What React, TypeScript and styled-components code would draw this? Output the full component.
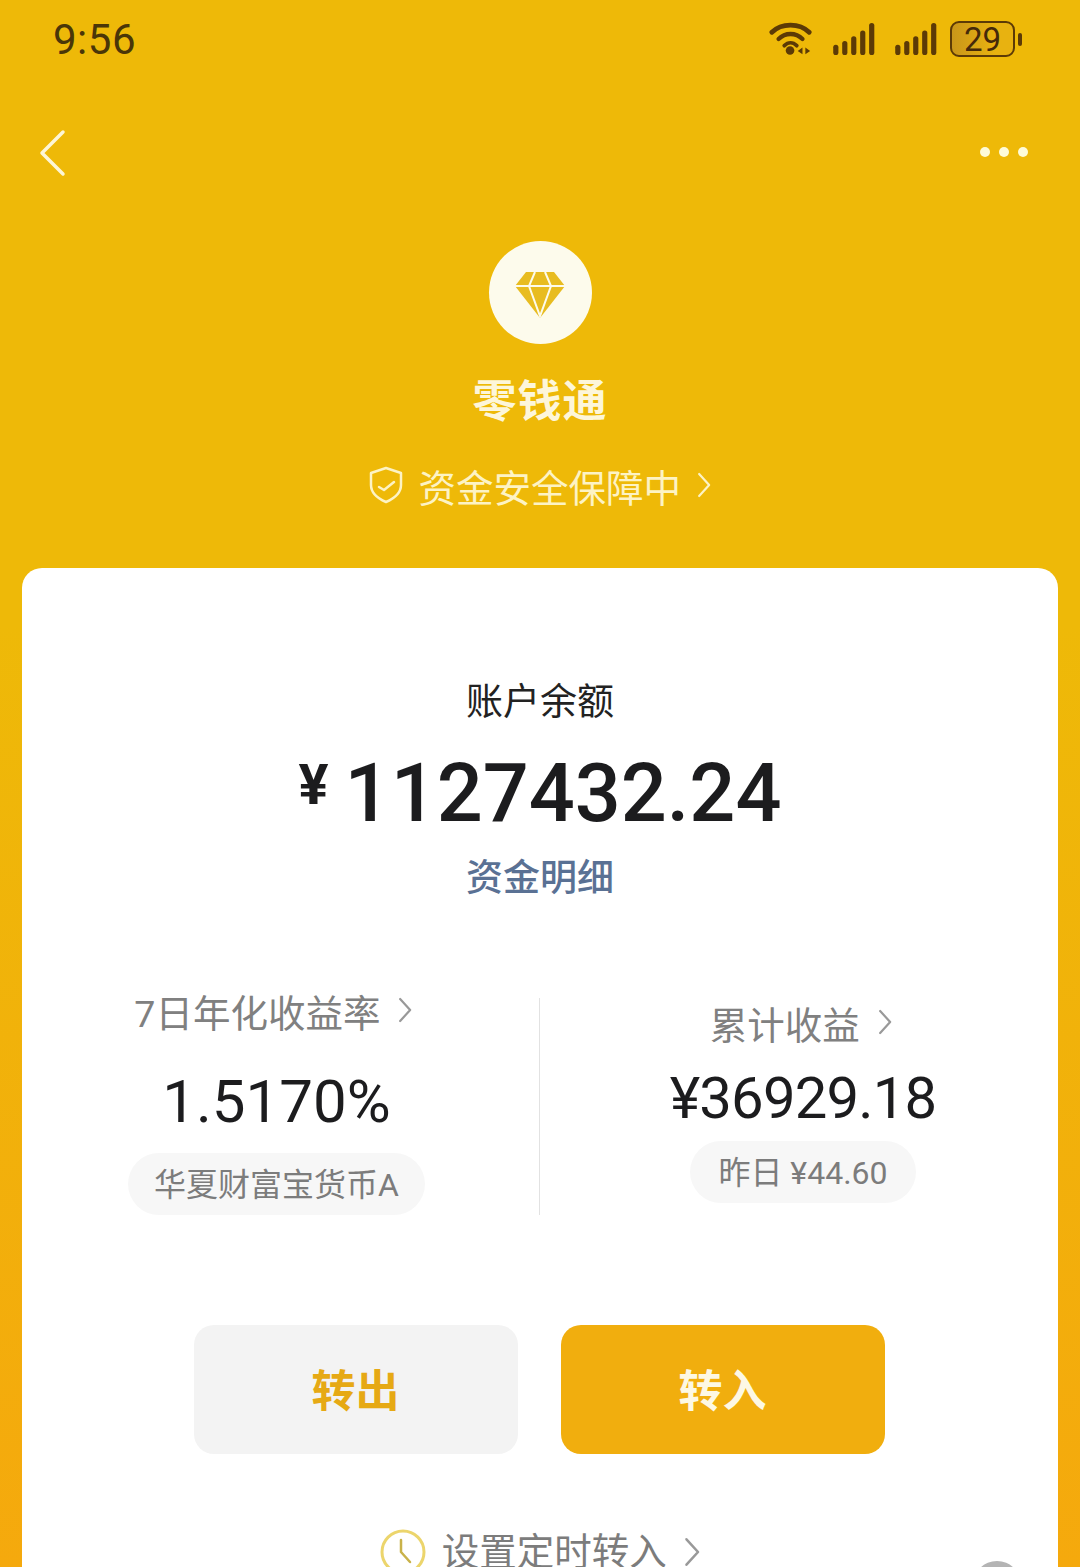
import { createGlobalStyle } from "styled-components";
import styled from "styled-components";

const GlobalStyle = createGlobalStyle`
  html, body {
    margin: 0;
    padding: 0;
    background: #f2b00c;
  }
  * {
    box-sizing: border-box;
  }
`;

const FONT = `Roboto, "Noto Sans CJK SC", sans-serif`;

const Page = styled.div`
  position: relative;
  width: 1080px;
  height: 1567px;
  overflow: hidden;
  background: linear-gradient(180deg, #eeb908 0%, #eeb908 40%, #f5a90d 100%);
  font-family: ${FONT};
`;

const StatusBar = styled.div`
  display: flex;
  justify-content: space-between;
  align-items: center;
  height: 78px;
  padding: 0 58px 0 53px;
`;

const Clock = styled.div`
  font-size: 42px;
  font-family: Roboto, sans-serif;
  letter-spacing: 0.5px;
  color: #4a3608;
`;

const StatusIcons = styled.div`
  display: flex;
  align-items: center;
  gap: 20px;
`;

const BatteryWrap = styled.div`
  display: flex;
  align-items: center;
  gap: 3px;
  margin-left: -7px;
`;

const BatteryBody = styled.div`
  display: flex;
  justify-content: center;
  align-items: center;
  width: 65px;
  height: 36px;
  border: 2.5px solid #5c3a06;
  border-radius: 9px;
  background: linear-gradient(90deg, #c9961a 0%, #e8b210 70%);
  font-family: Roboto, sans-serif;
  font-size: 33px;
  line-height: 31px;
  color: #45290a;
`;

const BatteryCap = styled.div`
  width: 4px;
  height: 13px;
  border-radius: 2px;
  background: #5c3a06;
`;

const NavBar = styled.div`
  display: flex;
  justify-content: space-between;
  align-items: center;
  height: 148px;
  padding: 0 52px 0 38px;
`;

const BackButton = styled.div`
  display: flex;
  padding-top: 2px;
`;

const Head = styled.div`
  display: flex;
  flex-direction: column;
  align-items: center;
  margin-top: 15px;
`;

const Badge = styled.div`
  display: flex;
  justify-content: center;
  align-items: center;
  width: 103px;
  height: 103px;
  padding-top: 5px;
  border-radius: 50%;
  background: #fdfbec;
`;

const Title = styled.div`
  margin-top: 31px;
  font-size: 44px;
  line-height: 54px;
  font-weight: 700;
  letter-spacing: 1px;
  color: #fdf6da;
`;

const SafeRow = styled.div`
  display: flex;
  align-items: center;
  margin-top: 31px;
  height: 50px;
  font-size: 37.5px;
  color: #fdf3c4;
`;

const SafeText = styled.span`
  margin: 0 16px 0 16px;
`;

const Card = styled.div`
  margin: 58px 22px 0;
  height: 1100px;
  background: #fff;
  border-radius: 20px 20px 0 0;
  padding-top: 112px;
  display: flex;
  flex-direction: column;
  align-items: center;
`;

const BalanceLabel = styled.div`
  font-size: 37px;
  line-height: 46px;
  color: #222;
`;

const Amount = styled.div`
  display: flex;
  align-items: baseline;
  margin-top: 16px;
  height: 104px;
  font-family: Roboto, sans-serif;
  font-weight: 500;
  font-size: 81px;
  line-height: 104px;
  color: #1c1c1e;
`;

const AmountUnit = styled.span`
  font-size: 56px;
  font-weight: 700;
  position: relative;
  top: -17px;
  margin-right: 16px;
`;

const DetailLink = styled.div`
  margin-top: 10px;
  font-size: 37px;
  line-height: 46px;
  font-weight: 500;
  color: #5a7194;
`;

const Stats = styled.div`
  display: grid;
  grid-template-columns: 517px 1px 1fr;
  width: 100%;
  height: 207px;
  margin-top: 96px;
`;

const Divider = styled.div`
  background: #e2e2e2;
`;

const StatCol = styled.div<{ $shift: number; $top: number }>`
  display: flex;
  flex-direction: column;
  align-items: center;
  margin-top: ${(p) => p.$top}px;
  transform: translateX(${(p) => p.$shift}px);
`;

const StatLabel = styled.div<{ $trim: number }>`
  display: flex;
  align-items: center;
  gap: 18px;
  height: 46px;
  padding-right: ${(p) => p.$trim}px;
  font-size: 37.5px;
  color: #808080;
`;

const StatValue = styled.div<{ $gap: number; $tight?: boolean }>`
  margin-top: ${(p) => p.$gap}px;
  height: 64px;
  font-family: Roboto, sans-serif;
  font-size: ${(p) => (p.$tight ? 58 : 60)}px;
  letter-spacing: ${(p) => (p.$tight ? -0.8 : 0)}px;
  line-height: 64px;
  color: #1c1c1e;
`;

const Pill = styled.div<{ $gap: number; $pad: number }>`
  display: flex;
  align-items: center;
  margin-top: ${(p) => p.$gap}px;
  height: 62px;
  padding: 0 ${(p) => p.$pad}px 4px;
  border-radius: 31px;
  background: #f7f7f7;
  font-size: 32px;
  color: #7c7c7c;
`;

const Actions = styled.div`
  display: flex;
  justify-content: center;
  gap: 43px;
  margin-top: 120px;
  padding-right: 2px;
`;

const ActionButton = styled.div<{ $primary?: boolean }>`
  display: flex;
  justify-content: center;
  align-items: center;
  width: 324px;
  height: 129px;
  padding-bottom: 4px;
  border-radius: 20px;
  font-size: 44px;
  font-weight: 700;
  background: ${(p) => (p.$primary ? "#f1ae0e" : "#f3f3f3")};
  color: ${(p) => (p.$primary ? "#fdf8e4" : "#e6a914")};
`;

const TimerRow = styled.div`
  display: flex;
  align-items: center;
  margin-top: 73px;
  font-size: 37.5px;
  line-height: 50px;
  color: #7c7c7c;
`;

const TimerText = styled.span`
  margin: 0 17px 0 16px;
`;

const HelpDot = styled.div`
  position: absolute;
  left: 973px;
  top: 1561px;
  width: 48px;
  height: 48px;
  border-radius: 50%;
  background: #b4b4b4;
`;

const Wifi = () => (
  <svg width="44" height="36" viewBox="0 0 46 36" fill="none" stroke="#5c3a06" strokeLinecap="round">
    <path d="M3 11 C13 1 32 1 42 11" strokeWidth="5" />
    <path d="M10 18 C17 11 28 11 35 18" strokeWidth="4.5" />
    <path d="M16 25 C20 21 25 21 29 25" strokeWidth="4" />
    <circle cx="22" cy="30" r="4.5" fill="#5c3a06" stroke="none" />
    <path d="M35 27 L30 30.5 L35 34 Z M38 27 L43 30.5 L38 34 Z" fill="#5c3a06" stroke="none" />
  </svg>
);

const Signal = () => (
  <svg width="42" height="34" viewBox="0 0 44 36" fill="#5c3a06">
    <rect x="0" y="24" width="5.5" height="11" rx="2.7" />
    <rect x="9.5" y="20" width="5.5" height="15" rx="2.7" />
    <rect x="19" y="15" width="5.5" height="20" rx="2.7" />
    <rect x="28.5" y="9" width="5.5" height="26" rx="2.7" />
    <rect x="38" y="1" width="5.5" height="34" rx="2.7" />
  </svg>
);

const BackIcon = () => (
  <svg width="30" height="48" viewBox="0 0 30 48" fill="none" stroke="#fdf6d6" strokeWidth="3.5" strokeLinecap="round" strokeLinejoin="round">
    <path d="M25 3 L4 24 L25 45" />
  </svg>
);

const MoreIcon = () => (
  <svg width="48" height="12" viewBox="0 0 48 12" fill="#fefbd8">
    <circle cx="5" cy="6" r="5" />
    <circle cx="24" cy="6" r="5" />
    <circle cx="43" cy="6" r="5" />
  </svg>
);

const Diamond = () => (
  <svg width="52" height="48" viewBox="0 0 52 48">
    <path d="M12 1 H40 L51 15 L26 47 L1 15 Z" fill="#e8bc20" />
    <path
      d="M1 15 H51 M21 1 L15 15 L26 45 L37 15 L31 1"
      fill="none"
      stroke="#fdfbec"
      strokeWidth="2"
    />
  </svg>
);

const Shield = () => (
  <svg width="34" height="38" viewBox="0 0 34 38" fill="none" stroke="#fdf3c4" strokeWidth="2.5" strokeLinecap="round" strokeLinejoin="round">
    <path d="M17 2 L32 7 V19 C32 28 24 33 17 36 C10 33 2 28 2 19 V7 Z" />
    <path d="M10 21 L15 24 L25 16" />
  </svg>
);

const Chevron = ({ color, size = 26 }: { color: string; size?: number }) => (
  <svg width={size * 0.55} height={size} viewBox="0 0 14 26" fill="none" stroke={color} strokeWidth="2.2" strokeLinecap="round" strokeLinejoin="round">
    <path d="M2 2 L12 13 L2 24" />
  </svg>
);

const ClockIcon = () => (
  <svg width="46" height="46" viewBox="0 0 46 46" fill="none" stroke="#ecd56c" strokeWidth="3" strokeLinecap="round" strokeLinejoin="round">
    <circle cx="23" cy="23" r="21" />
    <path d="M21 11 V23 L30 33" stroke="#c9b24a" strokeWidth="2.5" />
  </svg>
);

export default function App() {
  return (
    <Page>
      <GlobalStyle />
      <StatusBar>
        <Clock>9:56</Clock>
        <StatusIcons>
          <Wifi />
          <Signal />
          <Signal />
          <BatteryWrap>
            <BatteryBody>29</BatteryBody>
            <BatteryCap />
          </BatteryWrap>
        </StatusIcons>
      </StatusBar>
      <NavBar>
        <BackButton>
          <BackIcon />
        </BackButton>
        <MoreIcon />
      </NavBar>
      <Head>
        <Badge>
          <Diamond />
        </Badge>
        <Title>零钱通</Title>
        <SafeRow>
          <Shield />
          <SafeText>资金安全保障中</SafeText>
          <Chevron color="#fdf3c4" />
        </SafeRow>
      </Head>
      <Card>
        <BalanceLabel>账户余额</BalanceLabel>
        <Amount>
          <AmountUnit>¥</AmountUnit>1127432.24
        </Amount>
        <DetailLink>资金明细</DetailLink>
        <Stats>
          <StatCol $shift={-4} $top={-11}>
            <StatLabel $trim={6}>
              7日年化收益率
              <Chevron color="#999" />
            </StatLabel>
            <StatValue $gap={37}>1.5170%</StatValue>
            <Pill $gap={19} $pad={26}>华夏财富宝货币A</Pill>
          </StatCol>
          <Divider />
          <StatCol $shift={4} $top={1}>
            <StatLabel $trim={4}>
              累计收益
              <Chevron color="#999" />
            </StatLabel>
            <StatValue $gap={21} $tight>¥36929.18</StatValue>
            <Pill $gap={11} $pad={28}>昨日 ¥44.60</Pill>
          </StatCol>
        </Stats>
        <Actions>
          <ActionButton>转出</ActionButton>
          <ActionButton $primary>转入</ActionButton>
        </Actions>
        <TimerRow>
          <ClockIcon />
          <TimerText>设置定时转入</TimerText>
          <Chevron color="#999" size={30} />
        </TimerRow>
      </Card>
      <HelpDot />
    </Page>
  );
}
